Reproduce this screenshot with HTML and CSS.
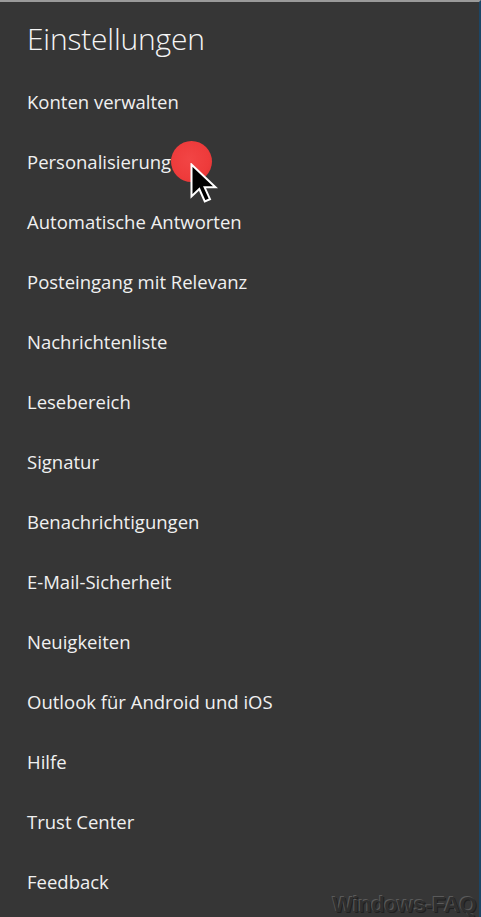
FILE: index.html
```html
<!DOCTYPE html>
<html lang="de">
<head>
<meta charset="utf-8">
<title>Einstellungen</title>
<link rel="stylesheet" href="styles.css">
</head>
<body>
<div class="panel">
  <h1 class="title">Einstellungen</h1>
  <ul class="menu">
    <li class="item">Konten verwalten</li>
    <li class="item item-active">Personalisierung
      <span class="click-dot"></span>
      <svg class="cursor" width="28" height="42" viewBox="0 0 28 42"><path d="M1.5 1.5 L1.5 33.5 L9.3 26 L14.8 38.5 L20 36.2 L14.6 24.3 L25.5 24.3 Z" fill="#000" stroke="#fff" stroke-width="2" stroke-linejoin="miter"/></svg>
    </li>
    <li class="item">Automatische Antworten</li>
    <li class="item">Posteingang mit Relevanz</li>
    <li class="item">Nachrichtenliste</li>
    <li class="item">Lesebereich</li>
    <li class="item">Signatur</li>
    <li class="item">Benachrichtigungen</li>
    <li class="item">E-Mail-Sicherheit</li>
    <li class="item">Neuigkeiten</li>
    <li class="item">Outlook für Android und iOS</li>
    <li class="item">Hilfe</li>
    <li class="item">Trust Center</li>
    <li class="item">Feedback</li>
  </ul>
  <div class="watermark">Windows-FAQ</div>
</div>
</body>
</html>
```
FILE: styles.css
```css
html, body {
  margin: 0;
  padding: 0;
  background: #363636;
}
body {
  width: 481px;
  height: 917px;
  overflow: hidden;
  font-family: "Open Sans", "Noto Sans", sans-serif;
  color: #f2f2f2;
}
.panel {
  position: relative;
  box-sizing: border-box;
  width: 481px;
  height: 917px;
  background: #363636;
  border-top: 2px solid #9a9a9a;
  border-right: 2px solid #1c4565;
  padding-left: 27px;
}
.title {
  margin: 0;
  height: 70px;
  font-size: 30px;
  font-weight: 300;
  line-height: 74px;
  letter-spacing: -0.2px;
  color: #f5f5f5;
}
.menu {
  list-style: none;
  margin: 0;
  padding: 0;
}
.item {
  position: relative;
  height: 60px;
  line-height: 60px;
  font-size: 18.5px;
  color: #f0f0f0;
}
.click-dot {
  position: absolute;
  left: 144px;
  top: 9px;
  width: 41px;
  height: 41px;
  border-radius: 50%;
  background: radial-gradient(circle at 45% 45%, #f24545 0%, #ee3b3b 60%, #d93434 100%);
}
.cursor {
  position: absolute;
  left: 163px;
  top: 31px;
}
.watermark {
  position: absolute;
  right: 3px;
  bottom: 1px;
  line-height: 22px;
  font-family: "Liberation Sans", sans-serif;
  font-weight: bold;
  font-size: 22px;
  letter-spacing: -0.5px;
  color: #2f2f2f;
  text-shadow: -1px -1px 0 #5a5a5a, 1px 1px 0 #202020;
}
```
